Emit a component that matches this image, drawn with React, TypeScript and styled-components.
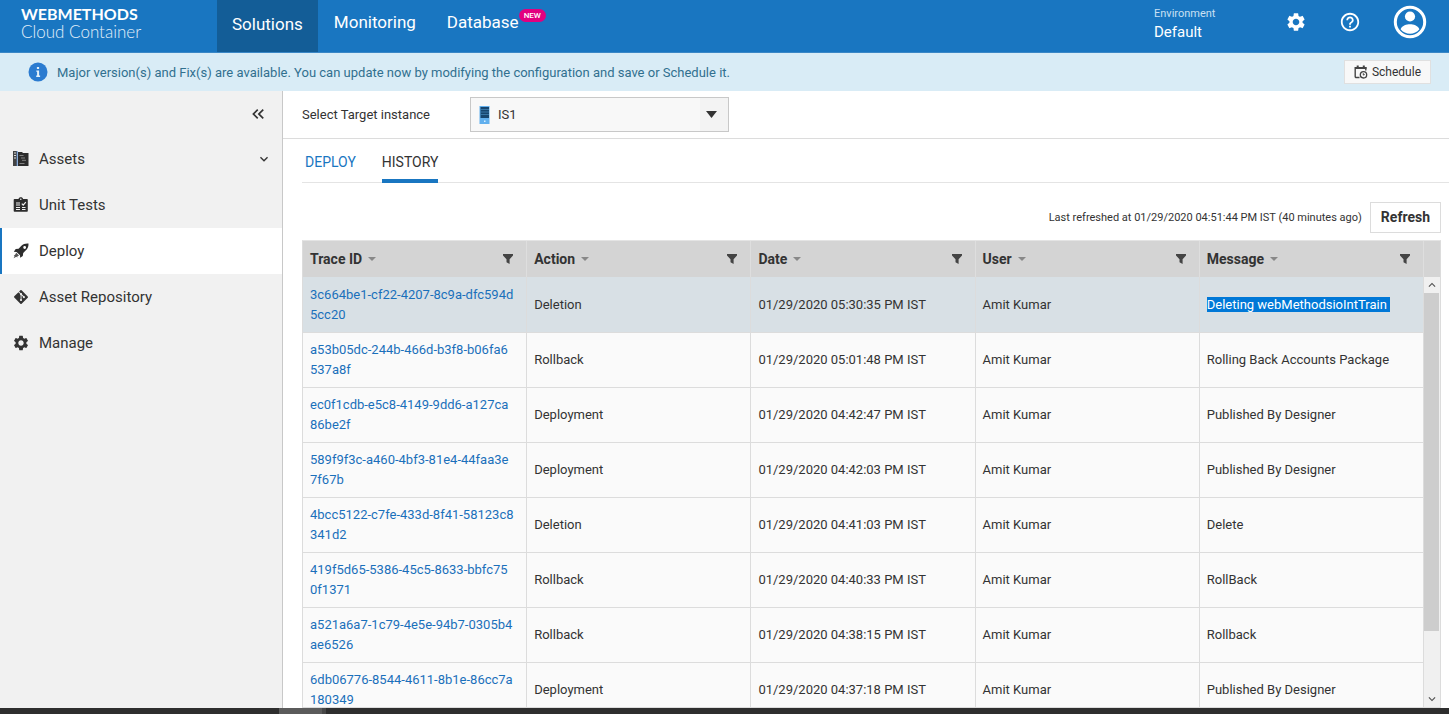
import React from 'react';
import styled, { createGlobalStyle, css } from 'styled-components';
import {
  MdSettings,
  MdHelpOutline,
  MdKeyboardDoubleArrowLeft,
  MdKeyboardArrowDown,
  MdKeyboardArrowUp,
} from 'react-icons/md';
import { FaGitAlt } from 'react-icons/fa';

const GlobalStyle = createGlobalStyle`
  *, *::before, *::after { box-sizing: border-box; }
  body {
    margin: 0;
    font-family: Roboto, "Liberation Sans", sans-serif;
    font-size: 13px;
    color: #333;
    background: #fff;
  }
  button, select { font: inherit; color: inherit; margin: 0; }
  a { text-decoration: none; }
  svg { display: block; flex: none; }
`;

const Page = styled.div`
  display: flex;
  flex-direction: column;
  height: 100vh;
  overflow: hidden;
`;

/* ---------- top bar ---------- */

const TopBar = styled.header`
  display: flex;
  flex: none;
  height: 53px;
  color: #fff;
  background: #1976c1;
  border-bottom: 1px solid #3a87c6;
`;

const Brand = styled.a`
  width: 217px;
  padding: 5px 0 0 21px;
  color: #fff;
  font-family: Lato, sans-serif;
  font-size: 16px;
  line-height: 18px;
`;

const BrandName = styled.strong`
  display: block;
  font-weight: 700;
`;

const BrandProduct = styled.span`
  color: #e4f0fa;
  font-size: 17px;
  font-weight: 300;
`;

const TopNav = styled.nav`
  display: flex;
  flex: 1;
  gap: 1px;
`;

const TopLink = styled.a<{ $active?: boolean }>`
  display: flex;
  align-items: flex-start;
  padding: ${(p) => (p.$active ? '14px 15px 0' : '12px 15px 0')};
  color: #fff;
  font-size: 17px;
  line-height: 20px;
  background: ${(p) => (p.$active ? '#135d97' : 'transparent')};
`;

const NewBadge = styled.span`
  margin-top: -3px;
  padding: 0 5px;
  border-radius: 7px;
  background: #e2007f;
  font-size: 8px;
  font-weight: 500;
  line-height: 13px;
`;

const Environment = styled.div`
  display: flex;
  flex-direction: column;
  width: 131px;
  padding-top: 6px;
`;

const EnvironmentLabel = styled.span`
  color: #c9e0f3;
  font-size: 11px;
  line-height: 16px;
`;

const EnvironmentName = styled.span`
  font-size: 15px;
  line-height: 20px;
`;

const TopActions = styled.div`
  display: flex;
  align-items: center;
  gap: 32px;
  height: 44px;
  padding-right: 22px;
`;

const IconButton = styled.button`
  display: flex;
  padding: 0;
  border: 0;
  background: none;
`;

/* ---------- notice ---------- */

const Notice = styled.div`
  display: flex;
  flex: none;
  align-items: center;
  height: 38px;
  padding: 0 18px 0 28px;
  color: #31708f;
  background: #d9ecf6;
`;

const NoticeText = styled.span`
  flex: 1;
  padding-left: 9px;
`;

const ScheduleButton = styled.button`
  display: flex;
  align-items: center;
  gap: 4px;
  height: 24px;
  padding: 0 9px;
  border: 1px solid #e0e0e0;
  color: #333;
  background: #f8f8f8;
  font-size: 12px;
`;

/* ---------- body ---------- */

const Body = styled.div`
  display: flex;
  flex: 1;
  min-height: 0;
`;

const SideBar = styled.aside`
  flex: none;
  width: 283px;
  border-right: 1px solid #c8c8c8;
  background: #f1f1f1;
`;

const CollapseRow = styled.div`
  display: flex;
  justify-content: flex-end;
  height: 45px;
  padding: 13px 14px 0 0;
`;

const SideLink = styled.a<{ $active?: boolean }>`
  display: flex;
  align-items: center;
  gap: 10px;
  height: 46px;
  padding: 0 10px 0 11px;
  border-left: 2px solid transparent;
  color: #333;
  font-size: 15px;
  ${(p) =>
    p.$active &&
    css`
      border-left-color: #1976c1;
      background: #fff;
    `}
`;

const SideIcon = styled.span`
  display: flex;
  align-items: center;
  justify-content: center;
  width: 16px;
  height: 16px;
`;

const SideLabel = styled.span`
  flex: 1;
`;

const Main = styled.main`
  display: flex;
  flex: 1;
  flex-direction: column;
  min-width: 0;
`;

const TargetBar = styled.div`
  display: flex;
  flex: none;
  align-items: center;
  height: 48px;
  padding-left: 19px;
  border-bottom: 1px solid #dcdcdc;
`;

const TargetLabel = styled.label`
  width: 168px;
`;

const SelectBox = styled.div`
  display: flex;
  align-items: center;
  width: 259px;
  height: 35px;
  padding-left: 8px;
  border: 1px solid #c8c8c8;
  background: #f8f8f8;
`;

const SelectInput = styled.select`
  flex: 1;
  height: 33px;
  padding: 0 8px;
  border: 0;
  background: none;
  appearance: none;
`;

const SelectArrow = styled.span`
  display: flex;
  align-items: center;
  height: 33px;
  padding: 0 11px 0 6px;
  background: #f3f3f3;
  pointer-events: none;
`;

const Content = styled.section`
  display: flex;
  flex: 1;
  flex-direction: column;
  min-height: 0;
  padding-left: 19px;
`;

const Tabs = styled.div`
  display: flex;
  flex: none;
  gap: 24px;
  height: 44px;
  border-bottom: 1px solid #e4e4e4;
`;

const Tab = styled.button<{ $active?: boolean }>`
  height: 44px;
  padding: 6px ${(p) => (p.$active ? '0' : '2px')} 0 ${(p) => (p.$active ? '0' : '3px')};
  border: 0;
  border-bottom: 4px solid ${(p) => (p.$active ? '#1976c1' : 'transparent')};
  color: ${(p) => (p.$active ? '#333' : '#1976c1')};
  background: none;
  font-size: 14px;
`;

const RefreshRow = styled.div`
  display: flex;
  flex: none;
  align-items: center;
  justify-content: flex-end;
  gap: 8px;
  height: 57px;
  padding: 12px 8px 0 0;
  font-size: 11px;
`;

const RefreshButton = styled.button`
  height: 31px;
  padding: 0 10px 2px;
  border: 1px solid #dcdcdc;
  background: #fff;
  font-size: 14px;
  font-weight: 700;
`;

const GridFrame = styled.div`
  display: flex;
  flex: 1;
  min-height: 0;
  margin-right: 8px;
  border: 1px solid #dcdcdc;
  border-top-color: #e4e4e4;
  overflow: hidden;
`;

const GridView = styled.div`
  flex: 1;
  overflow: hidden;
`;

const HistoryTable = styled.table`
  width: 100%;
  border-collapse: separate;
  border-spacing: 0;
  table-layout: fixed;
`;

const HeadCell = styled.th`
  height: 36px;
  padding: 0 13px 0 7px;
  border-right: 1px solid #dedede;
  background: #d4d4d4;
  font-size: 14px;
  font-weight: 700;
  text-align: left;
`;

const HeadContent = styled.div`
  display: flex;
  align-items: center;
  gap: 6px;
`;

const HeadFilter = styled(IconButton)`
  margin-left: auto;
`;

const Row = styled.tr<{ $selected?: boolean }>`
  height: ${(p) => (p.$selected ? '56px' : '55px')};
  background: ${(p) => (p.$selected ? '#d8e0e5' : '#fafafa')};
`;

const Cell = styled.td`
  padding: 0 7px;
  border-right: 1px solid #dcdcdc;
  border-bottom: 1px solid #dcdcdc;
  line-height: 20px;
`;

const TraceLink = styled.a`
  color: #1a70bb;
`;

const Selected = styled.mark`
  padding-right: 3px;
  color: #fff;
  background: #0078d7;
`;

const ScrollColumn = styled.div`
  display: flex;
  flex: none;
  flex-direction: column;
  width: 16px;
  background: #f0f0f0;
`;

const ScrollHead = styled.div`
  height: 36px;
  background: #d4d4d4;
`;

const ScrollButton = styled(IconButton)`
  align-items: center;
  justify-content: center;
  height: 16px;
  color: #505050;
`;

const ScrollTrack = styled.div`
  flex: 1;
`;

const ScrollThumb = styled.div`
  height: 85%;
  margin-right: 1px;
  background: #cdcdcd;
`;

const TaskBar = styled.footer`
  flex: none;
  height: 6px;
  padding-left: 279px;
  background: #2e2e2e;
`;

const TaskItem = styled.div`
  width: 47px;
  height: 6px;
  border-right: 4px solid #474747;
  background: #5b5b5b;
`;

/* ---------- drawings ---------- */

const InfoIcon = () => (
  <svg width="20" height="20" viewBox="0 0 20 20" aria-hidden="true">
    <circle cx="10" cy="10" r="9.5" fill="#2b7bd0" />
    <rect x="8.900" y="5" width="2.200" height="2" fill="#e3f0fa" />
    <path d="M8.300 8.400h2.800v5.200h1V15H8.200v-1.400h.9V9.800h-.8z" fill="#e3f0fa" />
  </svg>
);

const UserIcon = () => (
  <svg width="34" height="34" viewBox="0 0 34 34" aria-hidden="true">
    <circle cx="17" cy="17" r="14.7" fill="none" stroke="#fff" strokeWidth="3" />
    <circle cx="17" cy="11.5" r="5.1" fill="#fff" />
    <path d="M7.6 24.2c1.7-3.8 5.9-4.9 9.4-4.9s7.700 1.100 9.400 4.900a12 12 0 0 1-18.800 0z" fill="#fff" />
  </svg>
);

const ScheduleIcon = () => (
  <svg width="14" height="14" viewBox="0 0 14 14" fill="none" stroke="#444" aria-hidden="true">
    <path d="M5.500 12.500H2.200a1 1 0 0 1-1-1V2.700h10.600v2.800" strokeWidth="1.400" />
    <path d="M1 3h11.500M3.700.5v2.500M9.800.5v2.500" strokeWidth="2" />
    <circle cx="9.500" cy="9.800" r="3.200" strokeWidth="1.300" />
    <path d="M9.300 8.200v1.900l1.400-.6" />
  </svg>
);

const ServerIcon = () => (
  <svg width="11" height="18" viewBox="0 0 11 18" aria-hidden="true">
    <rect x="0.500" width="10" height="18" fill="#62b0ee" />
    <rect x="1.500" y="1" width="8.500" height="11" fill="#17466f" />
    <path d="M1.500 3.500h8.500M1.500 6h8.500M1.500 8.500h8.500" stroke="#4589bd" strokeWidth="0.700" />
    <rect x="5" y="14.500" width="1.500" height="1.500" fill="#d8efff" />
  </svg>
);

const AssetsIcon = () => (
  <svg width="16" height="16" viewBox="0 0 16 16" aria-hidden="true">
    <path d="M0 0h4v15H0z" fill="#444" />
    <path d="M1 2h2M1 4.500h2M1 7h2" stroke="#ddd" />
    <path d="M4.200 0v15" stroke="#5d8fd0" strokeWidth="1" />
    <path d="M5 1h4l1 1h5.500v13H5z" fill="#2d2d2d" />
    <path d="M6.500 4.500h4M8 7h4M9 9.300h4M6.500 12.500h5" stroke="#999" strokeWidth="0.800" />
  </svg>
);

const TestsIcon = () => (
  <svg width="16" height="16" viewBox="0 0 16 16" aria-hidden="true">
    <path
      d="M1.500 2h4C5.700.8 6.600.3 7.800.3S9.900.8 10.100 2H14a.8.8 0 0 1 .8.800V14a.8.8 0 0 1-.8.800H1.500A.8.8 0 0 1 .700 14V2.800A.8.8 0 0 1 1.500 2z"
      fill="#2d2d2d"
    />
    <circle cx="7.800" cy="2.300" r="0.800" fill="#f1f1f1" />
    <path d="M3 6h4M3 8h4M3 10.500h4M3 12.500h4M9 10.500h3.500M9 12.500h3.500" stroke="#f1f1f1" strokeWidth="1.100" />
    <path d="M8.800 6.600l1.400 1.500 2.600-3" fill="none" stroke="#f1f1f1" strokeWidth="1.200" />
  </svg>
);

const RocketIcon = () => (
  <svg width="16" height="16" viewBox="0 0 16 16" aria-hidden="true">
    <path
      fill="#2d2d2d"
      fillRule="evenodd"
      d="M15.500.5c-3.100-.2-5.200.4-7.100 2.300L5.600 5.700l-2.900.4L.8 8.700l2.800.2L7 12.200l.2 2.600 2.600-1.900.4-2.800 2.700-2.800c1.900-1.900 2.700-3.800 2.600-6.800zM11.600 3.100a1.400 1.400 0 1 1 .1 2.800 1.400 1.400 0 0 1-.1-2.800z"
    />
    <path d="M3.200 9.800l3 3-1.700.3-.1 1.500-1.100-.9L.6 15.200l1-2.200-.9-.6 1.400-.6z" fill="#555" />
  </svg>
);

const Caret = ({ width, height, color }: { width: number; height: number; color: string }) => (
  <svg width={width} height={height} viewBox="0 0 10 5" preserveAspectRatio="none" aria-hidden="true">
    <path d="M0 0h10L5 5z" fill={color} />
  </svg>
);

const FilterIcon = () => (
  <svg width="10" height="10" viewBox="0 0 10 10" aria-hidden="true">
    <path d="M0 0h10v1.500L6.600 5.200V10L3.500 8.200v-3L0 1.500z" fill="#444" />
  </svg>
);

/* ---------- data ---------- */

const columns = ['Trace ID', 'Action', 'Date', 'User', 'Message'];

/* Trace ids are stored in two pieces; a long id may wrap between them. */
const history = [
  ['3c664be1-cf22-4207-8c9a-dfc594d', '5cc20', 'Deletion', '05:30:35', 'Deleting webMethodsioIntTrain'],
  ['a53b05dc-244b-466d-b3f8-b06fa6', '537a8f', 'Rollback', '05:01:48', 'Rolling Back Accounts Package'],
  ['ec0f1cdb-e5c8-4149-9dd6-a127ca', '86be2f', 'Deployment', '04:42:47', 'Published By Designer'],
  ['589f9f3c-a460-4bf3-81e4-44faa3e', '7f67b', 'Deployment', '04:42:03', 'Published By Designer'],
  ['4bcc5122-c7fe-433d-8f41-58123c8', '341d2', 'Deletion', '04:41:03', 'Delete'],
  ['419f5d65-5386-45c5-8633-bbfc75', '0f1371', 'Rollback', '04:40:33', 'RollBack'],
  ['a521a6a7-1c79-4e5e-94b7-0305b4', 'ae6526', 'Rollback', '04:38:15', 'Rollback'],
  ['6db06776-8544-4611-8b1e-86cc7a', '180349', 'Deployment', '04:37:18', 'Published By Designer'],
];

const sideItems = [
  { label: 'Assets', icon: <AssetsIcon />, expandable: true },
  { label: 'Unit Tests', icon: <TestsIcon /> },
  { label: 'Deploy', icon: <RocketIcon />, active: true },
  { label: 'Asset Repository', icon: <FaGitAlt size={16} /> },
  { label: 'Manage', icon: <MdSettings size={18} /> },
];

export default function App() {
  return (
    <Page>
      <GlobalStyle />
      <TopBar>
        <Brand href="#home">
          <BrandName>WEBMETHODS</BrandName>
          <BrandProduct>Cloud Container</BrandProduct>
        </Brand>
        <TopNav>
          <TopLink href="#solutions" $active>Solutions</TopLink>
          <TopLink href="#monitoring">Monitoring</TopLink>
          <TopLink href="#database">
            Database
            <NewBadge>NEW</NewBadge>
          </TopLink>
        </TopNav>
        <Environment>
          <EnvironmentLabel>Environment</EnvironmentLabel>
          <EnvironmentName>Default</EnvironmentName>
        </Environment>
        <TopActions>
          <IconButton aria-label="Settings"><MdSettings size={22} color="#fff" /></IconButton>
          <IconButton aria-label="Help"><MdHelpOutline size={22} color="#fff" /></IconButton>
          <IconButton aria-label="Account"><UserIcon /></IconButton>
        </TopActions>
      </TopBar>
      <Notice>
        <InfoIcon />
        <NoticeText>
          Major version(s) and Fix(s) are available. You can update now by modifying the configuration and save or
          Schedule it.
        </NoticeText>
        <ScheduleButton><ScheduleIcon />Schedule</ScheduleButton>
      </Notice>
      <Body>
        <SideBar>
          <CollapseRow>
            <IconButton aria-label="Collapse menu"><MdKeyboardDoubleArrowLeft size={20} /></IconButton>
          </CollapseRow>
          <nav>
            {sideItems.map((item) => (
              <SideLink key={item.label} href="#" $active={item.active}>
                <SideIcon>{item.icon}</SideIcon>
                <SideLabel>{item.label}</SideLabel>
                {item.expandable && <MdKeyboardArrowDown size={16} />}
              </SideLink>
            ))}
          </nav>
        </SideBar>
        <Main>
          <TargetBar>
            <TargetLabel htmlFor="target">Select Target instance</TargetLabel>
            <SelectBox>
              <ServerIcon />
              <SelectInput id="target" defaultValue="IS1">
                <option>IS1</option>
              </SelectInput>
              <SelectArrow><Caret width={11} height={7} color="#333" /></SelectArrow>
            </SelectBox>
          </TargetBar>
          <Content>
            <Tabs role="tablist">
              <Tab role="tab">DEPLOY</Tab>
              <Tab role="tab" aria-selected $active>HISTORY</Tab>
            </Tabs>
            <RefreshRow>
              <span>Last refreshed at 01/29/2020 04:51:44 PM IST (40 minutes ago)</span>
              <RefreshButton>Refresh</RefreshButton>
            </RefreshRow>
            <GridFrame>
              <GridView>
                <HistoryTable>
                  <thead>
                    <tr>
                      {columns.map((name) => (
                        <HeadCell key={name} scope="col">
                          <HeadContent>
                            {name}
                            <Caret width={8} height={4} color="#888" />
                            <HeadFilter aria-label={`Filter ${name}`}><FilterIcon /></HeadFilter>
                          </HeadContent>
                        </HeadCell>
                      ))}
                    </tr>
                  </thead>
                  <tbody>
                    {history.map(([idHead, idTail, action, time, message], index) => (
                      <Row key={idHead} $selected={index === 0}>
                        <Cell><TraceLink href="#">{idHead}<wbr />{idTail}</TraceLink></Cell>
                        <Cell>{action}</Cell>
                        <Cell>01/29/2020 {time} PM IST</Cell>
                        <Cell>Amit Kumar</Cell>
                        <Cell>{index === 0 ? <Selected>{message}</Selected> : message}</Cell>
                      </Row>
                    ))}
                  </tbody>
                </HistoryTable>
              </GridView>
              <ScrollColumn>
                <ScrollHead />
                <ScrollButton aria-label="Scroll up"><MdKeyboardArrowUp size={14} /></ScrollButton>
                <ScrollTrack><ScrollThumb /></ScrollTrack>
                <ScrollButton aria-label="Scroll down"><MdKeyboardArrowDown size={14} /></ScrollButton>
              </ScrollColumn>
            </GridFrame>
          </Content>
        </Main>
      </Body>
      <TaskBar><TaskItem /></TaskBar>
    </Page>
  );
}
